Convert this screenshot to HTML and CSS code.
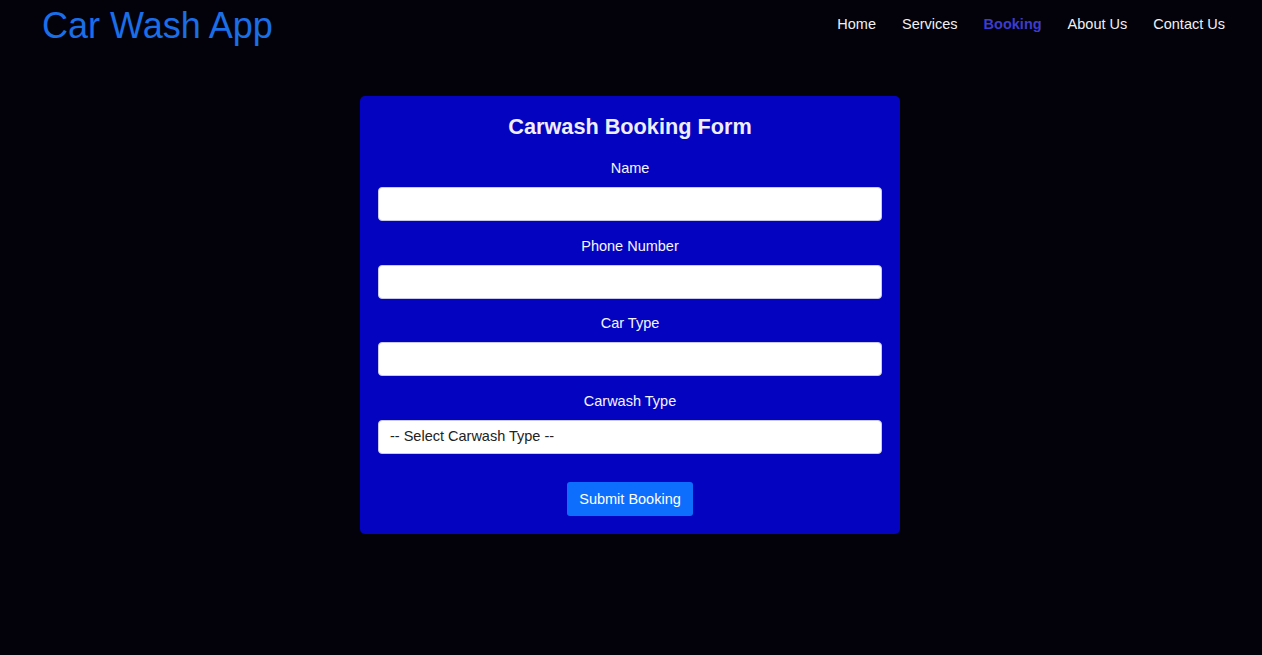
FILE: index.html
```html
<!DOCTYPE html>
<html>
<head>
<meta charset="utf-8">
<title>Car Wash App</title>
<link rel="stylesheet" href="styles.css">
</head>
<body>
<header class="topbar">
  <div class="logo">Car Wash App</div>
  <nav class="nav">
    <a href="#">Home</a>
    <a href="#">Services</a>
    <a href="#" class="active">Booking</a>
    <a href="#">About Us</a>
    <a href="#">Contact Us</a>
  </nav>
</header>
<main class="main">
  <form class="card">
    <h2 class="title">Carwash Booking Form</h2>
    <div class="group">
      <label>Name</label>
      <input type="text" class="field">
    </div>
    <div class="group">
      <label>Phone Number</label>
      <input type="text" class="field">
    </div>
    <div class="group">
      <label>Car Type</label>
      <input type="text" class="field">
    </div>
    <div class="group">
      <label>Carwash Type</label>
      <select class="field select">
        <option>-- Select Carwash Type --</option>
      </select>
    </div>
    <div class="actions">
      <button type="button" class="btn">Submit Booking</button>
    </div>
  </form>
</main>
</body>
</html>
```
FILE: styles.css
```css
* { box-sizing: border-box; }
html, body {
  margin: 0;
  padding: 0;
  background: #03020a;
  font-family: "Liberation Sans", Arial, sans-serif;
  color: #f0f0ff;
  height: 100%;
}
.topbar {
  display: flex;
  justify-content: space-between;
  align-items: flex-start;
  height: 52px;
  padding: 0 37px 0 42px;
}
.logo {
  font-size: 36px;
  color: #1a6ee8;
  line-height: 52px;
}
.nav {
  display: flex;
  gap: 26px;
  padding-top: 15px;
}
.nav a {
  font-size: 14.5px;
  line-height: 18px;
  color: #f0f0f5;
  text-decoration: none;
}
.nav a.active {
  color: #3c3cd0;
  font-weight: bold;
}
.main {
  display: flex;
  justify-content: center;
  padding-top: 44px;
  padding-right: 2px;
}
.card {
  width: 540px;
  background: #0404c0;
  border-radius: 5px;
  padding: 18px;
}
.title {
  margin: 0 0 19px;
  font-size: 21.7px;
  line-height: 26px;
  font-weight: bold;
  text-align: center;
  color: #eeeeff;
}
.group {
  display: flex;
  flex-direction: column;
  margin-bottom: 15.67px;
}
.group label {
  text-align: center;
  font-size: 14.5px;
  line-height: 18px;
  margin-bottom: 10px;
  color: #f4f4ff;
}
.field {
  height: 34px;
  width: 100%;
  background: #fff;
  border: 1px solid #c8c8e8;
  border-radius: 4px;
  padding: 0 11px 1px;
  font-family: "Liberation Sans", Arial, sans-serif;
  font-size: 14.5px;
  color: #222;
}
.select {
  appearance: none;
  -webkit-appearance: none;
}
.actions {
  display: flex;
  justify-content: center;
  padding-top: 12px;
}
.btn {
  height: 34px;
  padding: 0 12px;
  background: #0d6efd;
  color: #fff;
  border: none;
  border-radius: 3px;
  font-family: "Liberation Sans", Arial, sans-serif;
  font-size: 14.5px;
}
```
